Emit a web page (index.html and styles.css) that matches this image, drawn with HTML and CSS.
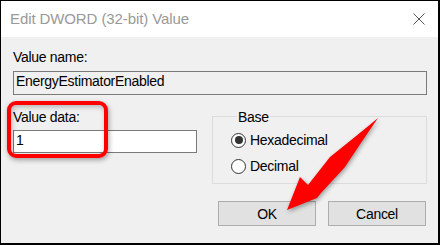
FILE: index.html
```html
<!DOCTYPE html>
<html lang="en-US">
    <head>
        <meta charset="utf-8">
        <title>Edit DWORD (32-bit) Value</title>
        <link rel="stylesheet" href="styles.css">
    </head>

    <body>
        <div class="window">
            <div class="titlebar">
                <span class="title">Edit DWORD (32-bit) Value</span>
                <svg class="close" width="12" height="12" viewBox="0 0 12 12">
                    <path d="M0.5 0.5 L11.5 11.5 M11.5 0.5 L0.5 11.5" stroke="#555" stroke-width="1" fill="none"/>
                </svg>
            </div>

            <div class="content">
                <div class="label">Value name:</div>
                <div class="field readonly">EnergyEstimatorEnabled</div>

                <div class="lower">
                    <div class="datacol">
                        <div class="label">Value data:</div>
                        <div class="field data">1</div>
                    </div>

                    <fieldset class="group">
                        <legend>Base</legend>
                        <div class="radio"><span class="dot checked"></span>Hexadecimal</div>
                        <div class="radio"><span class="dot"></span>Decimal</div>
                    </fieldset>
                </div>

                <div class="buttons">
                    <button class="btn">OK</button>
                    <button class="btn">Cancel</button>
                </div>
            </div>

            <!-- annotation overlays -->
            <div class="highlight"></div>
            <svg class="arrow" width="440" height="245" viewBox="0 0 440 245">
                <path d="M287 210 L300 177 L308 185 L330 157 Q360 133 378 118 Q362 141 345 167 L321 193 L317 198 Z" fill="#f00"/>
            </svg>
        </div>
    </body>
</html>
```

FILE: styles.css
```css
html, body {
    margin: 0;
    padding: 0;
}

body {
    font-family: "Liberation Sans", Arial, sans-serif;
    font-size: 14px;
    letter-spacing: -0.3px;
    color: #000;
}

.window {
    position: relative;
    box-sizing: border-box;
    width: 440px;
    height: 245px;
    background-color: #f0f0f0;
    border-style: solid;
    border-color: #000;
    border-width: 1px 2px 2px 1px;
    overflow: hidden;
}

.titlebar {
    display: flex;
    justify-content: space-between;
    align-items: flex-start;
    height: 36px;
    box-sizing: border-box;
    padding: 8px 13px 0 9px;
    background-color: #fff;
}

.title {
    font-size: 15px;
    line-height: 20px;
    letter-spacing: -0.1px;
    color: #999;
}

.close {
    margin-top: 4px;
}

.content {
    padding: 12px 11px 0 12px;
}

.label {
    line-height: 16px;
}

.field {
    box-sizing: border-box;
    border: 1px solid #7a7a7a;
    line-height: 16px;
    padding: 1px 2px 0;
}

.field.readonly {
    margin-top: 6px;
    height: 24px;
    padding-top: 1px;
    background-color: #f0f0f0;
}

.lower {
    display: flex;
    gap: 15px;
    margin-top: 14px;
}

.datacol {
    width: 184px;
}

.field.data {
    margin-top: 5px;
    height: 23px;
    background-color: #fff;
}

.group {
    flex: 1;
    min-width: 0;
    margin: -2px 0 0 0;
    padding: 5px 0 7px 18px;
    border: 1px solid #dcdcdc;
    display: flex;
    flex-direction: column;
    gap: 6px;
}

.group legend {
    margin-left: 6px;
    padding: 2px 1px 0;
    line-height: 16px;
}

.radio {
    display: flex;
    align-items: center;
    gap: 4px;
    height: 20px;
    line-height: 20px;
}

.dot {
    box-sizing: border-box;
    width: 15px;
    height: 15px;
    border: 1px solid #333;
    border-radius: 50%;
    background-color: #fff;
    display: flex;
    align-items: center;
    justify-content: center;
}

.dot.checked::after {
    content: "";
    width: 8px;
    height: 8px;
    border-radius: 50%;
    background-color: #333;
}

.buttons {
    display: flex;
    justify-content: flex-end;
    gap: 12px;
    margin-top: 17px;
    padding-right: 1px;
}

.btn {
    width: 98px;
    height: 25px;
    padding: 0;
    background-color: #e1e1e1;
    border: 1px solid #adadad;
    font-family: "Liberation Sans", Arial, sans-serif;
    font-size: 14px;
    letter-spacing: -0.3px;
    color: #000;
}

.highlight {
    position: absolute;
    left: 6px;
    top: 100px;
    width: 93px;
    height: 49px;
    border: 4px solid #f00;
    border-radius: 9px;
    box-shadow: 1px 2px 5px rgba(0, 0, 0, 0.35), inset 1px 2px 5px rgba(0, 0, 0, 0.25);
}

.arrow {
    position: absolute;
    left: -1px;
    top: -1px;
    filter: drop-shadow(1px 2px 2px rgba(0, 0, 0, 0.35));
}
```
